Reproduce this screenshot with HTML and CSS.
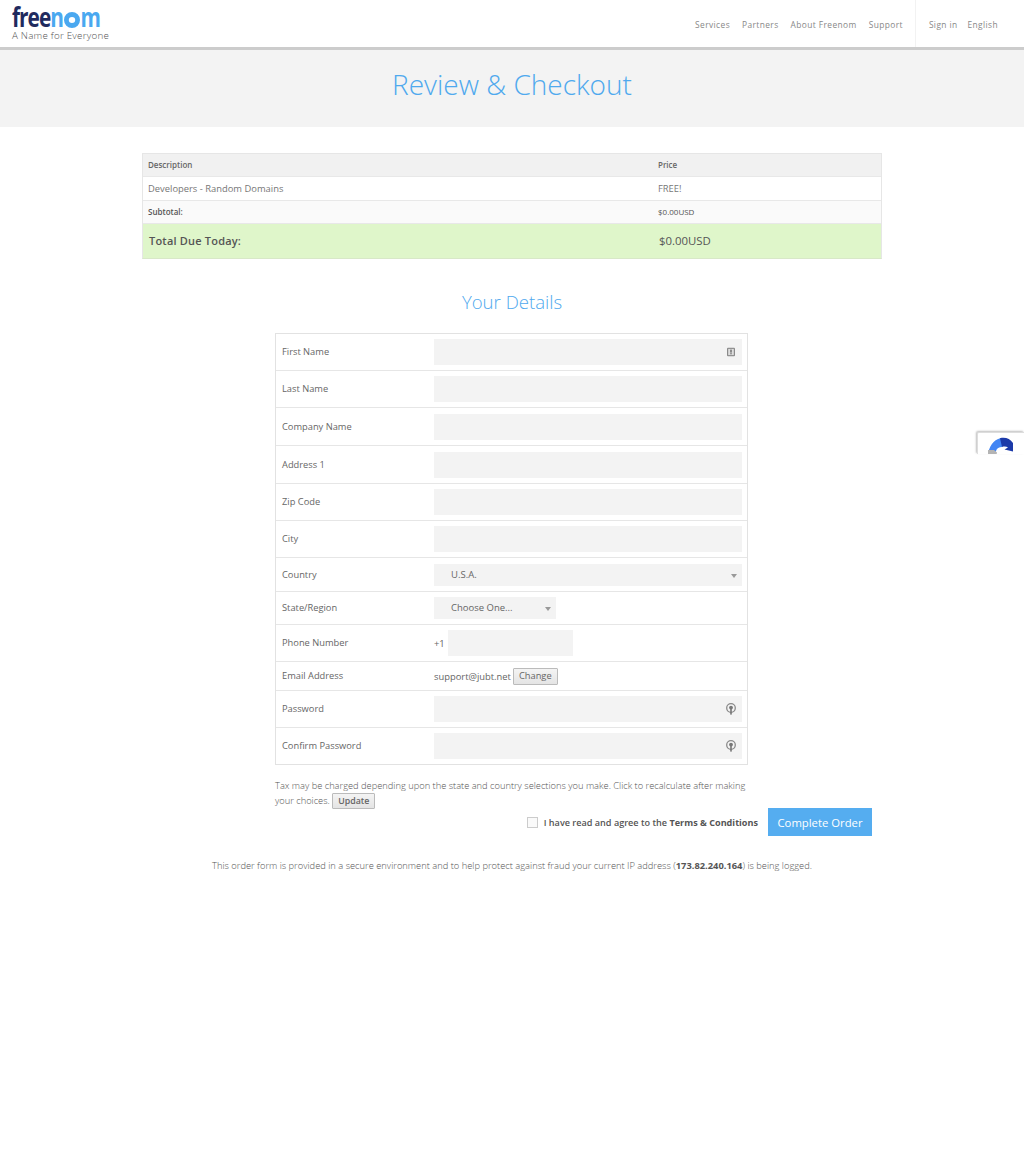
FILE: index.html
```html
<!DOCTYPE html>
<html lang="en">
<head>
<meta charset="utf-8">
<title>Review &amp; Checkout</title>
<link rel="stylesheet" href="styles.css">
</head>
<body>
<header class="topbar">
  <a class="brand" href="#">
    <span class="logo"><span class="logo-dark">free</span><span class="logo-blue">n<span class="logo-o"></span>m</span></span>
    <span class="tagline">A Name for Everyone</span>
  </a>
  <nav class="nav">
    <a href="#">Services</a><a href="#">Partners</a><a href="#">About Freenom</a><a href="#">Support</a>
  </nav>
  <nav class="nav nav-side">
    <a href="#">Sign in</a><a href="#">English</a>
  </nav>
</header>
<section class="hero"><h1>Review &amp; Checkout</h1></section>
<main class="page">
  <div class="summary">
    <div class="sum-row sum-head"><span>Description</span><span>Price</span></div>
    <div class="sum-row sum-item"><span>Developers - Random Domains</span><span>FREE!</span></div>
    <div class="sum-row sum-sub"><span class="strong">Subtotal:</span><span>$0.00USD</span></div>
    <div class="sum-row sum-total"><span class="strong">Total Due Today:</span><span class="total-value">$0.00USD</span></div>
  </div>
  <h2>Your Details</h2>
  <form class="details">
    <div class="row r37"><label>First Name</label><div class="field"><input type="text">
      <svg class="fi" viewBox="0 0 10 10"><rect x="1" y="0.7" width="8" height="8.6" rx="1" fill="#8a8a8a"/><rect x="2.2" y="1.9" width="5.6" height="6.2" fill="#dedede"/><rect x="4.4" y="2.6" width="1.2" height="3" fill="#555"/><rect x="4.4" y="6.2" width="1.2" height="1.1" fill="#555"/></svg></div></div>
    <div class="row r37"><label>Last Name</label><div class="field"><input type="text"></div></div>
    <div class="row r38"><label>Company Name</label><div class="field"><input type="text"></div></div>
    <div class="row r38"><label>Address 1</label><div class="field"><input type="text"></div></div>
    <div class="row r37"><label>Zip Code</label><div class="field"><input type="text"></div></div>
    <div class="row r37"><label>City</label><div class="field"><input type="text"></div></div>
    <div class="row r34"><label>Country</label><div class="field"><div class="select full">U.S.A.<span class="caret"></span></div></div></div>
    <div class="row r33"><label>State/Region</label><div class="field"><div class="select short">Choose One...<span class="caret"></span></div></div></div>
    <div class="row r37"><label>Phone Number</label><div class="field inline"><span class="prefix">+1</span><input class="phone" type="text"></div></div>
    <div class="row r29"><label>Email Address</label><div class="field inline"><span>support@jubt.net</span><button class="btn" type="button">Change</button></div></div>
    <div class="row r37"><label>Password</label><div class="field"><input type="password">
      <svg class="fi fi-key" viewBox="0 0 10 12"><circle cx="5" cy="5" r="4.300" fill="none" stroke="#8a8a8a" stroke-width="1.300"/><circle cx="5" cy="4.600" r="1.900" fill="#777"/><rect x="4.200" y="4.600" width="1.600" height="7" fill="#777"/></svg></div></div>
    <div class="row r36 last"><label>Confirm Password</label><div class="field"><input type="password">
      <svg class="fi fi-key" viewBox="0 0 10 12"><circle cx="5" cy="5" r="4.300" fill="none" stroke="#8a8a8a" stroke-width="1.300"/><circle cx="5" cy="4.600" r="1.900" fill="#777"/><rect x="4.200" y="4.600" width="1.600" height="7" fill="#777"/></svg></div></div>
  </form>
  <p class="tax">Tax may be charged depending upon the state and country selections you make. Click to recalculate after making your choices. <button class="btn btn-bold" type="button">Update</button></p>
  <div class="agree">
    <span class="check"></span>
    <span class="agree-text">I have read and agree to the <a href="#">Terms &amp; Conditions</a></span>
    <button class="order" type="button">Complete Order</button>
  </div>
  <p class="secure">This order form is provided in a secure environment and to help protect against fraud your current IP address (<b>173.82.240.164</b>) is being logged.</p>
</main>
<div class="recaptcha">
  <svg viewBox="0 0 26 18" width="26" height="18">
    <path d="M0 17C1 10 5 3 12 1.200L14 1V10C11 10 9 11 8 14L6 18H0z" fill="#4285f4"/>
    <path d="M12 1.200C18 0 22 2 25 6V14.500L16.500 12.500L20 10.500C18.500 9.500 16.500 9.300 14 10z" fill="#1c3aa9"/>
    <path d="M0 13H6L9 15.500L8.500 18H0z" fill="#b4b4b4"/>
  </svg>
</div>
</body>
</html>
```
FILE: styles.css
```css
* { box-sizing: border-box; }
html, body { margin: 0; padding: 0; }
body {
  position: relative;
  height: 1175px;
  overflow: hidden;
  background: #fff;
  font-family: "Open Sans", "Liberation Sans", sans-serif;
  font-size: 12px;
  color: #666;
}
a { color: inherit; text-decoration: none; }

.topbar {
  display: flex;
  align-items: stretch;
  height: 50px;
  border-bottom: 3px solid #ccc;
  padding-left: 12px;
  background: #fff;
}
.brand { display: flex; flex-direction: column; margin-right: auto; width: 110px; }
.logo {
  display: block;
  height: 30px;
  padding-top: 4px;
  font-size: 26px;
  line-height: 26px;
  font-weight: 700;
  letter-spacing: -1.200px;
  white-space: nowrap;
  transform: scaleX(.8);
  transform-origin: left center;
}
.logo-dark { color: #1f2a5e; }
.logo-blue { color: #4aa8f0; }
.logo-o {
  display: inline-block;
  width: 20px;
  height: 16px;
  margin: 0 1px;
  border-style: solid;
  border-color: #4aa8f0;
  border-width: 5px 6px;
  border-radius: 50%;
  vertical-align: -1px;
}
.tagline {
  font-size: 9.800px;
  line-height: 12px;
  font-weight: 300;
  letter-spacing: 0.22px;
  color: #555;
  white-space: nowrap;
}
.nav { display: flex; align-items: center; gap: 12px; font-size: 8.400px; letter-spacing: 0.400px; color: #888; padding-top: 1px; }
.nav-side {
  margin-left: 12px;
  border-left: 1px solid #f2f2f2;
  padding: 1px 26px 0 13px;
  gap: 10px;
}

.hero { height: 77px; padding-bottom: 10px; background: #f3f3f3; display: flex; align-items: center; justify-content: center; }
.hero h1 { margin: 0; font-size: 28px; line-height: 40px; font-weight: 300; color: #4fa9ee; }

.page { width: 740px; margin: 0 auto; padding-top: 26px; }

.summary { border: 1px solid #e6e6e6; border-bottom: 1px solid #d8e8c8; }
.sum-row { display: grid; grid-template-columns: 510px 1fr; align-items: center; padding-left: 5px; border-bottom: 1px solid #e8e8e8; font-size: 10px; color: #555; }
.strong { font-weight: 600; }
.sum-head { height: 23px; padding-bottom: 2px; background: #f1f1f1; font-size: 8px; font-weight: 600; color: #666; }
.sum-item { height: 24px; font-size: 9.400px; color: #777; }
.sum-sub { height: 23px; padding-bottom: 2px; background: #fafafa; font-size: 8px; }
.sum-total { height: 34px; padding-bottom: 2px; background: #dff6ca; border-bottom: 0; font-size: 11px; padding-left: 6px; }
.sum-total .strong { letter-spacing: 0.2px; }
.total-value { font-size: 11.400px; }

h2 { margin: 30px 0 18px; font-size: 18.600px; line-height: 26px; font-weight: 300; text-align: center; color: #4fa9ee; }

.details { width: 473px; margin-left: 133px; border: 1px solid #e2e2e2; }
.row { display: flex; align-items: center; padding: 0 5px 0 6px; border-bottom: 1px solid #e6e6e6; }
.row.last { border-bottom: 0; }
.r36 { height: 36px; }
.r37 { height: 37px; }
.r38 { height: 38px; }
.r34 { height: 34px; }
.r33 { height: 33px; }
.r29 { height: 29px; }
.row label { width: 152px; flex: none; padding-bottom: 1px; font-size: 9.300px; color: #666; }
.field { position: relative; flex: 1; display: flex; align-items: center; font-size: 9.400px; color: #666; }
.field input { width: 100%; height: 26px; border: 0; background: #f3f3f3; padding: 0 8px; }
.field.inline { gap: 2px; }
.field input.phone { width: 125px; flex: none; margin-left: 1px; }
.fi { position: absolute; right: 6px; top: 8px; width: 10px; height: 10px; }
.fi-key { top: 7px; height: 12px; }
.select { position: relative; height: 22px; line-height: 22px; background: #f3f3f3; padding-left: 17px; font-size: 9.500px; color: #666; }
.full { width: 308px; }
.short { width: 122px; }
.caret {
  position: absolute;
  right: 5px;
  top: 10px;
  border-left: 3.500px solid transparent;
  border-right: 3.500px solid transparent;
  border-top: 4px solid #999;
}
.btn {
  height: 17px;
  padding: 0 5px;
  border: 1px solid #bbb;
  border-radius: 1px;
  background: linear-gradient(#f4f4f4, #e4e4e4);
  font-family: inherit;
  font-size: 9.300px;
  line-height: 14px;
  color: #666;
  vertical-align: middle;
}
.btn-bold { height: 16px; margin: -3px 0; font-size: 8.800px; font-weight: 600; vertical-align: baseline; }

.tax {
  width: 473px;
  height: 30px;
  margin: 13px 0 0 133px;
  font-size: 9.300px;
  line-height: 15px;
  font-weight: 300;
  color: #555;
}
.agree { display: flex; align-items: center; justify-content: flex-end; height: 28px; padding-right: 10px; }
.check { width: 11px; height: 11px; border: 1px solid #ccc; background: #fafafa; margin-right: 6px; }
.agree-text { font-size: 9.100px; font-weight: 600; color: #555; margin-right: 10px; }
.agree-text a { font-weight: 700; }
.order { width: 104px; height: 28px; border: 0; background: #55adf0; color: #fff; font-family: inherit; font-size: 11.300px; }
.secure { margin: 23px 0 0; text-align: center; font-size: 9.330px; line-height: 14px; font-weight: 300; color: #555; white-space: nowrap; }
.secure b { font-weight: 700; }

.recaptcha {
  position: absolute;
  left: 977px;
  top: 432px;
  width: 47px;
  height: 22px;
  overflow: hidden;
  background: #fff;
  border-radius: 2px 0 0 0;
  border-left: 1px solid #ddd;
  border-top: 1px solid #ddd;
  box-shadow: -1px -1px 2px rgba(0,0,0,.25);
  padding: 4px 0 0 10px;
}
.recaptcha svg { display: block; }
```
